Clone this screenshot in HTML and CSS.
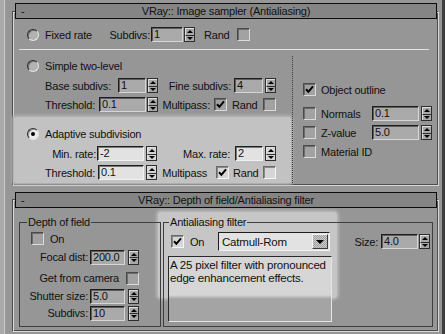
FILE: index.html
```html
<!DOCTYPE html>
<html lang="en">
<head>
  <meta charset="UTF-8">
  <title>VRay Image sampler</title>
  <link rel="stylesheet" href="styles.css">
</head>
<body>

<div class="screen">
  <div class="edge-left"></div>
  <div class="main">

    <!-- Image sampler rollout -->
    <section class="rollout sampler">
      <div class="rollout-head"><span class="minus">-</span><span class="title">VRay:: Image sampler (Antialiasing)</span></div>

      <div class="row fixed">
        <span class="radio"></span>
        <span class="opt-label l-fixed">Fixed rate</span>
        <span class="lbl l-subdivs">Subdivs:</span>
        <div class="field f32">1</div>
        <div class="arrows sp1"><span class="up"></span><span class="dn"></span></div>
        <span class="tag l-rand1">Rand</span>
        <span class="check"></span>
      </div>

      <div class="sep"></div>

      <div class="cols">
        <div class="col-left">
          <div class="row radio-row simple-head">
            <span class="radio"></span>
            <span class="opt-label">Simple two-level</span>
          </div>
          <div class="row r-base">
            <span class="lbl l-base">Base subdivs:</span>
            <div class="field f28">1</div>
            <div class="arrows sp1"><span class="up"></span><span class="dn"></span></div>
            <span class="lbl l-fine">Fine subdivs:</span>
            <div class="field f29">4</div>
            <div class="arrows sp2"><span class="up"></span><span class="dn"></span></div>
          </div>
          <div class="row r-thr">
            <span class="lbl l-thr">Threshold:</span>
            <div class="field f47">0.1</div>
            <div class="arrows sp1"><span class="up"></span><span class="dn"></span></div>
            <span class="lbl l-multi">Multipass:</span>
            <span class="check"><svg viewBox="0 0 9 9"><path d="M1 4.2 L3.4 6.8 L8 1.4"/></svg></span>
            <span class="tag l-rand">Rand</span>
            <span class="check"></span>
          </div>

          <div class="adaptive">
            <div class="row radio-row">
              <span class="radio lit on"></span>
              <span class="opt-label">Adaptive subdivision</span>
            </div>
            <div class="row r-min">
              <span class="lbl l-min">Min. rate:</span>
              <div class="field lit f47">-2</div>
              <div class="arrows lit sp2"><span class="up"></span><span class="dn"></span></div>
              <span class="lbl l-max">Max. rate:</span>
              <div class="field lit f28">2</div>
              <div class="arrows lit sp2"><span class="up"></span><span class="dn"></span></div>
            </div>
            <div class="row r-thr2">
              <span class="lbl l-thr2">Threshold:</span>
              <div class="field lit f46">0.1</div>
              <div class="arrows lit sp2"><span class="up"></span><span class="dn"></span></div>
              <span class="lbl l-multi2">Multipass</span>
              <span class="check lit"><svg viewBox="0 0 9 9"><path d="M1 4.2 L3.4 6.8 L8 1.4"/></svg></span>
              <span class="tag l-rand2">Rand</span>
              <span class="check lit"></span>
            </div>
          </div>
        </div>

        <div class="col-right">
          <div class="row opt r-outline">
            <span class="check"><svg viewBox="0 0 9 9"><path d="M1 4.2 L3.4 6.8 L8 1.4"/></svg></span>
            <span class="tag l-opt">Object outline</span>
          </div>
          <div class="row opt r-normals">
            <span class="check"></span>
            <span class="tag l-opt">Normals</span>
            <div class="field f47">0.1</div>
            <div class="arrows sp2"><span class="up"></span><span class="dn"></span></div>
          </div>
          <div class="row opt r-z">
            <span class="check"></span>
            <span class="tag l-opt">Z-value</span>
            <div class="field f47">5.0</div>
            <div class="arrows sp2"><span class="up"></span><span class="dn"></span></div>
          </div>
          <div class="row opt r-z">
            <span class="check"></span>
            <span class="tag l-opt">Material ID</span>
          </div>
        </div>
      </div>
    </section>

    <!-- Depth of field / AA filter rollout -->
    <section class="rollout filters">
      <div class="glow"></div>
      <div class="rollout-head"><span class="minus">-</span><span class="title">VRay:: Depth of field/Antialiasing filter</span></div>

      <div class="groups">
        <fieldset class="group dof">
          <legend>Depth of field</legend>
          <div class="row d-on">
            <span class="check"></span>
            <span class="tag">On</span>
          </div>
          <div class="row d-row d-focal">
            <span class="lbl l-dof">Focal dist:</span>
            <div class="field f35">200.0</div>
            <div class="arrows sp3"><span class="up"></span><span class="dn"></span></div>
          </div>
          <div class="row d-row d-cam">
            <span class="lbl l-cam">Get from camera</span>
            <span class="check"></span>
          </div>
          <div class="row d-row d-shutter">
            <span class="lbl l-dof">Shutter size:</span>
            <div class="field f35">5.0</div>
            <div class="arrows sp3"><span class="up"></span><span class="dn"></span></div>
          </div>
          <div class="row d-row d-subdivs">
            <span class="lbl l-dof">Subdivs:</span>
            <div class="field f35">10</div>
            <div class="arrows sp3"><span class="up"></span><span class="dn"></span></div>
          </div>
        </fieldset>

        <fieldset class="group aa">
          <legend>Antialiasing filter</legend>
          <div class="row a-top">
            <span class="check lit"><svg viewBox="0 0 9 9"><path d="M1 4.2 L3.4 6.8 L8 1.4"/></svg></span>
            <span class="tag l-on">On</span>
            <div class="dropdown">
              <span class="value">Catmull-Rom</span>
              <span class="btn"></span>
            </div>
            <span class="lbl l-size">Size:</span>
            <div class="field f37">4.0</div>
            <div class="arrows sp1"><span class="up"></span><span class="dn"></span></div>
          </div>
          <div class="desc">A 25 pixel filter with pronounced<br>edge enhancement effects.</div>
        </fieldset>
      </div>
    </section>

  </div>
  <div class="edge-right"></div>
</div>

</body>
</html>
```

FILE: styles.css
```css
* {
  box-sizing: border-box;
}

body {
  margin: 0;
  background: #969696;
  font-family: "Liberation Sans", Arial, sans-serif;
  font-size: 11px;
  letter-spacing: -0.2px;
  color: #111;
}

.screen {
  display: flex;
  width: 445px;
  height: 334px;
  overflow: hidden;
}

.edge-left {
  width: 12px;
  flex: none;
  background: linear-gradient(to right, #a9a9a9 0 4px, #c6c6c6 4px 5px, #9c9c9c 5px 6px, #969696 6px);
}

.edge-right {
  width: 6px;
  flex: none;
  background: linear-gradient(to right, #969696 0 3px, #3e3e3e 3px);
}

.main {
  flex: 1;
  min-width: 0;
}

/* rollouts */
.rollout {
  position: relative;
  z-index: 0;
  padding: 0 1px;
  border: 1px solid;
  border-color: #4e4e4e #d8d8d8 #d8d8d8 #4e4e4e;
  box-shadow: inset 1px 1px 0 #d8d8d8, inset -1px -1px 0 #4e4e4e;
}

.sampler {
  margin-top: 11px;
  padding-bottom: 2px;
}

.filters {
  margin-top: 13px;
  padding-bottom: 4px;
}

.rollout-head {
  display: flex;
  align-items: center;
  height: 16px;
  margin: -9px 0 0 1px;
  border: 1px solid #0c0c0c;
  background: #858585;
}

.filters .rollout-head {
  margin-top: -8px;
}

.rollout-head .minus {
  width: 16px;
  padding-left: 5px;
}

.rollout-head .title {
  flex: 1;
  text-align: center;
  padding-right: 16px;
}

.row {
  display: flex;
  align-items: center;
  white-space: nowrap;
}

.lbl {
  flex: none;
  text-align: right;
}

.tag {
  flex: none;
}

.sep {
  height: 1px;
  margin: 7px 8px 0 5px;
  background: #e2e2e2;
}

/* radio + checkbox */
.radio {
  flex: none;
  width: 12px;
  height: 12px;
  margin-left: 13px;
  border-radius: 50%;
  border: 1px solid;
  border-color: #2a2a2a #e4e4e4 #e4e4e4 #2a2a2a;
  background: #b2b2b2;
  box-shadow: inset 1px 1px 0 #777;
  display: flex;
  align-items: center;
  justify-content: center;
}

.radio.lit {
  background: #ececec;
  box-shadow: inset 1px 1px 0 #999;
}

.radio.on::after {
  content: "";
  width: 4px;
  height: 4px;
  border-radius: 50%;
  background: #000;
}

.opt-label {
  flex: none;
  margin-left: 6px;
}

.check {
  flex: none;
  width: 13px;
  height: 13px;
  border: 1px solid;
  border-color: #4a4a4a #dadada #dadada #4a4a4a;
  box-shadow: inset 1px 1px 0 #6c6c6c;
  background: #a2a2a2;
  display: flex;
  align-items: center;
  justify-content: center;
}

.check.lit {
  border-color: #6a6a6a #f4f4f4 #f4f4f4 #6a6a6a;
  box-shadow: inset 1px 1px 0 #8a8a8a;
  background: #d6d6d6;
}

.check svg {
  width: 9px;
  height: 9px;
}

.check path {
  fill: none;
  stroke: #000;
  stroke-width: 2;
}

/* spinners */
.field {
  flex: none;
  height: 15px;
  padding-left: 2px;
  line-height: 13px;
  border: 1px solid;
  border-color: #1e1e1e #d6d6d6 #d6d6d6 #1e1e1e;
  box-shadow: inset 1px 1px 0 #5c5c5c;
  background: #aaaaaa;
}

.field.lit {
  border-color: #1e1e1e #f2f2f2 #f2f2f2 #1e1e1e;
  box-shadow: inset 1px 1px 0 #7a7a7a;
  background: #e2e2e2;
}

.f28 { width: 28px; }
.f29 { width: 29px; }
.f32 { width: 32px; }
.f35 { width: 35px; }
.f37 { width: 37px; }
.f46 { width: 46px; }
.f47 { width: 47px; }

.arrows {
  flex: none;
  width: 11px;
  height: 15px;
  display: flex;
  flex-direction: column;
  border: 1px solid #2e2e2e;
  background: #a8a8a8;
}

.arrows.lit {
  background: #d4d4d4;
}

.arrows span {
  flex: 1;
  display: flex;
  align-items: center;
  justify-content: center;
  border-left: 1px solid #dedede;
}

.arrows span.up {
  border-top: 1px solid #dedede;
}

.arrows span.dn {
  border-top: 1px solid #2e2e2e;
}

.arrows span::before {
  content: "";
  border-left: 3px solid transparent;
  border-right: 3px solid transparent;
}

.arrows .up::before {
  border-bottom: 3px solid #000;
}

.arrows .dn::before {
  border-top: 3px solid #000;
}

.sp1 { margin-left: 1px; }
.sp2 { margin-left: 2px; }
.sp3 { margin-left: 3px; }

/* image sampler */
.fixed {
  height: 15px;
  margin-top: 8px;
}

.l-fixed { width: 58px; }
.l-subdivs { width: 48px; padding-right: 1px; }
.l-rand1 { width: 33px; margin-left: 9px; }

.cols {
  display: flex;
}

.col-left {
  width: 278px;
}

.radio-row {
  height: 14px;
}

.simple-head {
  margin-top: 9px;
}

.r-base {
  height: 15px;
  margin-top: 5px;
}

.l-base { width: 104px; padding-right: 7px; }
.l-fine { width: 76px; padding-right: 3px; }

.r-thr {
  height: 15px;
  margin-top: 4px;
}

.l-thr { width: 85px; padding-right: 4px; }
.l-multi { width: 56px; padding-right: 4px; }
.l-rand { width: 31px; margin-left: 5px; }

.adaptive {
  width: 277px;
  margin-top: 5px;
  padding: 10px 0 3px;
  background: #c2c2c2;
  border-radius: 2px;
  box-shadow: 0 0 3px 2px #b2b2b2;
}

.r-min {
  height: 15px;
  margin-top: 5px;
}

.l-min { width: 83px; padding-right: 1px; }
.l-max { width: 78px; padding-right: 5px; }

.r-thr2 {
  height: 15px;
  margin-top: 4px;
}

.l-thr2 { width: 84px; padding-right: 3px; }
.l-multi2 { width: 59px; padding-right: 9px; }
.l-rand2 { width: 30px; margin-left: 4px; }

.col-right {
  flex: 1;
  height: 127px;
  margin-top: 6px;
  border-left: 1px dotted #3c3c3c;
}

.opt {
  height: 15px;
  padding-left: 10px;
  margin-top: 4px;
}

.r-outline { margin-top: 26px; }
.r-normals { margin-top: 9px; }

.l-opt { width: 51px; margin-left: 5px; }

/* depth of field / aa filter */
.glow {
  position: absolute;
  left: 145px;
  top: 12px;
  width: 179px;
  height: 86px;
  z-index: -1;
  background: #c6c6c6;
  border-radius: 3px;
  box-shadow: 0 0 3px 2px #b6b6b6;
}

.groups {
  display: flex;
  gap: 2px;
  margin: 8px 4px 0 5px;
}

.group {
  margin: 0;
  min-width: 0;
  padding: 4px 0 4px;
  border: 1px solid #3e3e3e;
}

.group legend {
  padding: 0 1px;
  line-height: 12px;
}

.dof {
  width: 142px;
  flex: none;
}

.dof legend {
  margin-left: 7px;
}

.aa {
  flex: 1;
}

.aa legend {
  margin-left: 5px;
}

.d-on {
  height: 13px;
  padding-left: 11px;
}

.d-on .tag {
  margin-left: 6px;
}

.d-row {
  height: 14px;
}

.d-focal { margin-top: 5px; }
.d-cam { margin-top: 7px; }
.d-shutter { margin-top: 4px; }
.d-subdivs { margin-top: 3px; }

.l-dof { width: 70px; padding-right: 2px; }
.l-cam { width: 106px; padding-right: 7px; }

.a-top {
  height: 19px;
  padding-left: 7px;
}

.l-on { width: 28px; margin-left: 6px; }
.l-size { width: 51px; padding-right: 3px; }

.dropdown {
  flex: none;
  width: 112px;
  height: 19px;
  display: flex;
  align-items: center;
  padding: 1px 1px 1px 3px;
  border: 1px solid;
  border-color: #1e1e1e #f2f2f2 #f2f2f2 #1e1e1e;
  background: #e2e2e2;
  font-size: 11.5px;
}

.dropdown .value {
  flex: 1;
}

.dropdown .btn {
  width: 16px;
  height: 15px;
  display: flex;
  align-items: center;
  justify-content: center;
  border: 1px solid;
  border-color: #f4f4f4 #3a3a3a #3a3a3a #f4f4f4;
  background: repeating-conic-gradient(#cdcdcd 0 25%, #9e9e9e 0 50%) 0 0 / 2px 2px;
}

.dropdown .btn::before {
  content: "";
  border-left: 4px solid transparent;
  border-right: 4px solid transparent;
  border-top: 4px solid #000;
}

.desc {
  width: 164px;
  height: 66px;
  margin: 5px 0 0 4px;
  padding: 2px 0 0 1px;
  font-size: 11.5px;
  line-height: 13px;
  white-space: nowrap;
  overflow: hidden;
  border: 1px solid;
  border-color: #2a2a2a #e6e6e6 #e6e6e6 #2a2a2a;
  background: linear-gradient(#d6d6d6 0 38px, #a4a4a4 42px);
}
```
